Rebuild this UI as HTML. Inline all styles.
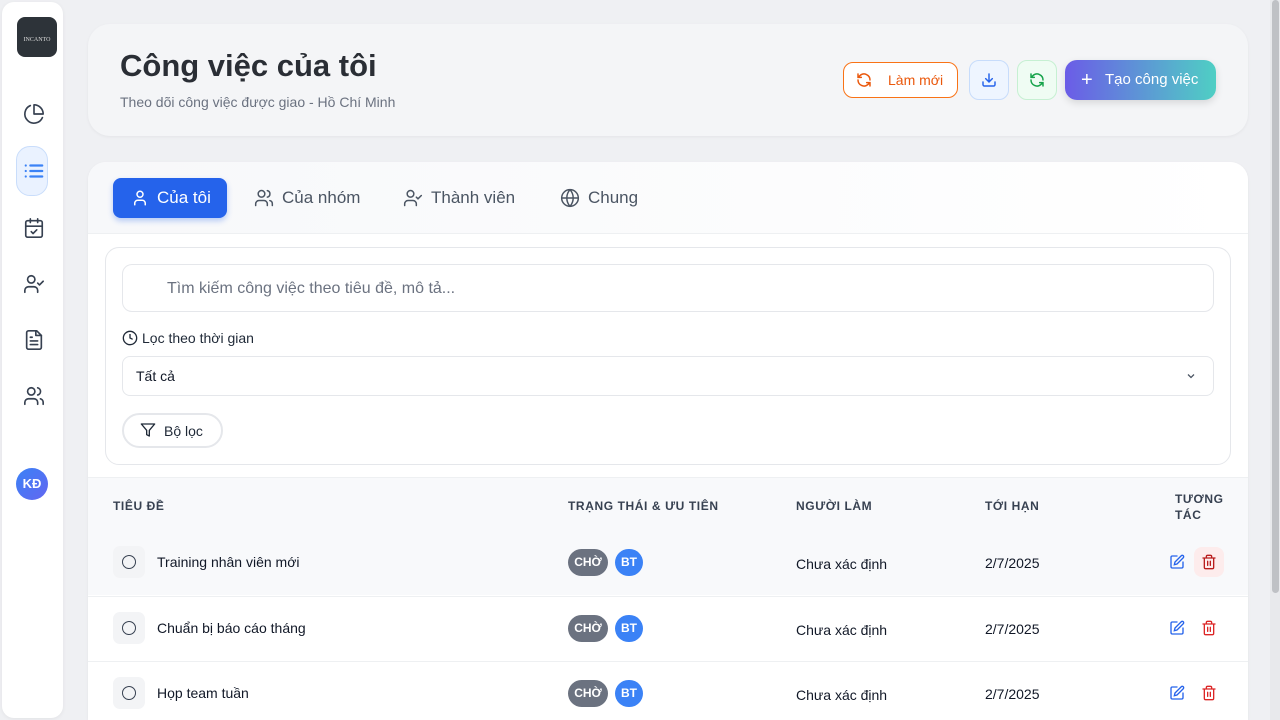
<!DOCTYPE html>
<html style="height:720px;overflow:hidden"><head><meta charset="utf-8"><style>
*{box-sizing:border-box;margin:0;padding:0}
body{width:1280px;height:720px;overflow:hidden;background:#eff0f3;font-family:"Liberation Sans","Noto Sans CJK SC",sans-serif;color:#1f2937;position:relative}
.abs{position:absolute}
svg{display:block}
.side{left:2px;top:2px;width:61px;height:716px;background:#fff;border-radius:12px;box-shadow:0 1px 4px rgba(0,0,0,.06)}
.si{position:absolute;left:21px;width:22px;height:22px}
.hdr{left:88px;top:24px;width:1160px;height:112px;background:#f4f5f7;border-radius:22px;box-shadow:0 1px 3px rgba(0,0,0,.05)}
.main{left:88px;top:162px;width:1160px;height:558px;background:#fff;border-radius:18px 18px 0 0;box-shadow:0 1px 3px rgba(0,0,0,.05);overflow:hidden}
.tab{position:absolute;top:16px;height:40px;display:flex;align-items:center;gap:8px;font-size:17px;color:#4b5563}
.th{position:absolute;font-size:12px;font-weight:bold;letter-spacing:.6px;color:#374151}
.row{position:absolute;left:0;width:1160px;height:65px;border-top:1px solid #eef0f2}
.chk{position:absolute;left:25px;top:16px;width:32px;height:32px;background:#f3f4f6;border-radius:7px}
.chk div{position:absolute;left:9px;top:9px;width:14px;height:14px;border:1.6px solid #374151;border-radius:50%}
.tt{position:absolute;left:69px;top:24px;font-size:14px;color:#111827}
.b1{position:absolute;left:480px;top:19px;width:40px;height:27px;border-radius:14px;background:#6b7280;color:#fff;font-size:12px;font-weight:bold;text-align:center;line-height:27px}
.b2{position:absolute;left:527px;top:19px;width:28px;height:27px;border-radius:14px;background:#3b82f6;color:#fff;font-size:12px;font-weight:bold;text-align:center;line-height:27px}
.p{position:absolute;left:708px;top:26px;font-size:14px;color:#111827}
.d{position:absolute;left:897px;top:25px;font-size:14px;color:#111827}
.ed{position:absolute;left:1081px;top:24px}
.dl{position:absolute;left:1106px;top:17px;width:30px;height:30px;border-radius:8px}
</style></head><body>
<div class="abs side">
 <div class="abs" style="left:15px;top:15px;width:40px;height:40px;background:#2d3339;border-radius:8px;color:#ddd;font-family:'Liberation Serif',serif;font-size:6px;text-align:center;padding-top:20px">INCANTO</div>
 <svg class="si" style="top:101px" viewBox="0 0 24 24" fill="none" stroke="#374151" stroke-width="1.8" stroke-linecap="round" stroke-linejoin="round"><path d="M21.2 15.9A10 10 0 1 1 8 2.8"/><path d="M22 12A10 10 0 0 0 12 2v10z"/></svg>
 <div class="abs" style="left:14px;top:144px;width:32px;height:50px;background:#eaf2ff;border:1.5px solid #c9ddfb;border-radius:14px"></div>
 <svg class="si" style="top:158px" viewBox="0 0 24 24" fill="none" stroke="#3b82f6" stroke-width="2.4" stroke-linecap="round"><path d="M8 6h13M8 12h13M8 18h13M3 6h.01M3 12h.01M3 18h.01"/></svg>
 <svg class="si" style="top:215px" viewBox="0 0 24 24" fill="none" stroke="#374151" stroke-width="1.8" stroke-linecap="round" stroke-linejoin="round"><rect x="3" y="4" width="18" height="18" rx="2"/><path d="M16 2v4M8 2v4M3 10h18M9 16l2 2 4-4"/></svg>
 <svg class="si" style="top:271px" viewBox="0 0 24 24" fill="none" stroke="#374151" stroke-width="1.8" stroke-linecap="round" stroke-linejoin="round"><path d="M16 21v-2a4 4 0 0 0-4-4H6a4 4 0 0 0-4 4v2"/><circle cx="9" cy="7" r="4"/><path d="M16 11l2 2 4-4"/></svg>
 <svg class="si" style="top:327px" viewBox="0 0 24 24" fill="none" stroke="#374151" stroke-width="1.8" stroke-linecap="round" stroke-linejoin="round"><path d="M15 2H6a2 2 0 0 0-2 2v16a2 2 0 0 0 2 2h12a2 2 0 0 0 2-2V7z"/><path d="M14 2v5h6M16 13H8M16 17H8M10 9H8"/></svg>
 <svg class="si" style="top:383px" viewBox="0 0 24 24" fill="none" stroke="#374151" stroke-width="1.8" stroke-linecap="round" stroke-linejoin="round"><path d="M16 21v-2a4 4 0 0 0-4-4H6a4 4 0 0 0-4 4v2"/><circle cx="9" cy="7" r="4"/><path d="M22 21v-2a4 4 0 0 0-3-3.9M16 3.1a4 4 0 0 1 0 7.8"/></svg>
 <div class="abs" style="left:14px;top:466px;width:32px;height:32px;border-radius:50%;background:linear-gradient(135deg,#3b82f6,#6366f1);color:#fff;font-size:13px;font-weight:bold;text-align:center;line-height:32px">KĐ</div>
</div>

<div class="abs hdr">
 <div class="abs" style="left:32px;top:24px;font-size:31px;font-weight:bold;color:#2a2e35">Công việc của tôi</div>
 <div class="abs" style="left:32px;top:70px;font-size:14px;color:#6b7280">Theo dõi công việc được giao - Hồ Chí Minh</div>
 <div class="abs" style="left:755px;top:38px;width:115px;height:36px;border:1.3px solid #f97316;border-radius:10px;background:#fff;color:#ea580c;font-size:14px;line-height:34px">
  <svg class="abs" style="left:12px;top:9px" width="16" height="16" viewBox="0 0 24 24" fill="none" stroke="#ea580c" stroke-width="2.2" stroke-linecap="round"><path d="M21 12a9 9 0 0 0-15-6.7L3 8M3 3v5h5M3 12a9 9 0 0 0 15 6.7L21 16M21 21v-5h-5"/></svg>
  <span class="abs" style="left:44px">Làm mới</span></div>
 <div class="abs" style="left:881px;top:36px;width:40px;height:40px;border:1.3px solid #c7dcfb;border-radius:10px;background:#eef5ff">
  <svg class="abs" style="left:11px;top:11px" width="16" height="16" viewBox="0 0 24 24" fill="none" stroke="#2563eb" stroke-width="2.2" stroke-linecap="round"><path d="M21 15v4a2 2 0 0 1-2 2H5a2 2 0 0 1-2-2v-4M7 10l5 5 5-5M12 15V3"/></svg></div>
 <div class="abs" style="left:929px;top:36px;width:40px;height:40px;border:1.3px solid #c6f0d2;border-radius:10px;background:#effcf3">
  <svg class="abs" style="left:11px;top:11px" width="16" height="16" viewBox="0 0 24 24" fill="none" stroke="#16a34a" stroke-width="2.2" stroke-linecap="round"><path d="M21 12a9 9 0 0 0-15-6.7L3 8M3 3v5h5M3 12a9 9 0 0 0 15 6.7L21 16M21 21v-5h-5"/></svg></div>
 <div class="abs" style="left:977px;top:36px;width:151px;height:40px;border-radius:12px;background:linear-gradient(90deg,#6b5ce7,#4fcfc4);box-shadow:0 3px 8px rgba(0,0,0,.12);color:#fff;font-size:15px;line-height:40px">
  <span class="abs" style="left:16px;font-size:20px">+</span><span class="abs" style="left:40px">Tạo công việc</span></div>
</div>

<div class="abs main">
 <div class="abs" style="left:0;top:0;width:1160px;height:72px;background:linear-gradient(90deg,#f7f8fa,#fff);border-bottom:1px solid #eef0f2"></div>
 <div class="tab" style="left:25px;width:114px;background:#2563eb;border-radius:8px;color:#fff;padding-left:18px;box-shadow:0 3px 6px rgba(37,99,235,.3)">
  <svg width="18" height="18" viewBox="0 0 24 24" fill="none" stroke="#fff" stroke-width="2" stroke-linecap="round"><path d="M19 21v-2a4 4 0 0 0-4-4H9a4 4 0 0 0-4 4v2"/><circle cx="12" cy="7" r="4"/></svg>Của tôi</div>
 <div class="tab" style="left:166px"><svg width="20" height="20" viewBox="0 0 24 24" fill="none" stroke="#4b5563" stroke-width="1.8" stroke-linecap="round"><path d="M16 21v-2a4 4 0 0 0-4-4H6a4 4 0 0 0-4 4v2"/><circle cx="9" cy="7" r="4"/><path d="M22 21v-2a4 4 0 0 0-3-3.9M16 3.1a4 4 0 0 1 0 7.8"/></svg>Của nhóm</div>
 <div class="tab" style="left:315px"><svg width="20" height="20" viewBox="0 0 24 24" fill="none" stroke="#4b5563" stroke-width="1.8" stroke-linecap="round"><path d="M16 21v-2a4 4 0 0 0-4-4H6a4 4 0 0 0-4 4v2"/><circle cx="9" cy="7" r="4"/><path d="M16 11l2 2 4-4"/></svg>Thành viên</div>
 <div class="tab" style="left:472px"><svg width="20" height="20" viewBox="0 0 24 24" fill="none" stroke="#4b5563" stroke-width="1.8"><circle cx="12" cy="12" r="10"/><path d="M2 12h20M12 2a15 15 0 0 1 0 20M12 2a15 15 0 0 0 0 20"/></svg>Chung</div>

 <div class="abs" style="left:17px;top:85px;width:1126px;height:218px;border:1px solid #e5e7eb;border-radius:14px"></div>
 <div class="abs" style="left:34px;top:102px;width:1092px;height:48px;border:1px solid #e5e7eb;border-radius:10px;font-size:16px;color:#6b7280;padding:15px 0 0 44px">Tìm kiếm công việc theo tiêu đề, mô tả...</div>
 <svg class="abs" style="left:34px;top:168px" width="16" height="16" viewBox="0 0 24 24" fill="none" stroke="#1f2937" stroke-width="2"><circle cx="12" cy="12" r="10"/><path d="M12 6v6l4 2"/></svg>
 <div class="abs" style="left:54px;top:168px;font-size:14px;color:#1f2937">Lọc theo thời gian</div>
 <div class="abs" style="left:34px;top:194px;width:1092px;height:40px;border:1px solid #e5e7eb;border-radius:8px;font-size:14px;color:#111827;padding:11px 0 0 13px">Tất cả</div>
 <svg class="abs" style="left:1097px;top:208px" width="12" height="12" viewBox="0 0 24 24" fill="none" stroke="#4b5563" stroke-width="2.5"><path d="M6 9l6 6 6-6"/></svg>
 <div class="abs" style="left:34px;top:251px;width:101px;height:35px;border:2px solid #e5e7eb;border-radius:18px;font-size:14px;color:#1f2937;padding:8px 0 0 40px">Bộ lọc</div>
 <svg class="abs" style="left:52px;top:260px" width="16" height="16" viewBox="0 0 24 24" fill="none" stroke="#1f2937" stroke-width="2" stroke-linejoin="round"><path d="M22 3H2l8 9.5V19l4 2v-8.5z"/></svg>

 <div class="abs" style="left:0;top:315px;width:1160px;height:60px;background:#f8f9fb;border-top:1px solid #eef0f2"></div>
 <div class="th" style="left:25px;top:337px">TIÊU ĐỀ</div>
 <div class="th" style="left:480px;top:337px">TRẠNG THÁI &amp; ƯU TIÊN</div>
 <div class="th" style="left:708px;top:337px">NGƯỜI LÀM</div>
 <div class="th" style="left:897px;top:337px">TỚI HẠN</div>
 <div class="th" style="left:1087px;top:329px;line-height:16px">TƯƠNG<br>TÁC</div>

 <div class="row" style="top:368px;border-top:none;background:#f8f9fb"><div class="chk"><div></div></div><div class="tt">Training nhân viên mới</div><div class="b1">CHỜ</div><div class="b2">BT</div><div class="p">Chưa xác định</div><div class="d">2/7/2025</div>
  <svg class="ed" width="16" height="16" viewBox="0 0 24 24" fill="none" stroke="#2563eb" stroke-width="2" stroke-linecap="round"><path d="M12 3H5a2 2 0 0 0-2 2v14a2 2 0 0 0 2 2h14a2 2 0 0 0 2-2v-7"/><path d="M18.4 2.6a2.1 2.1 0 0 1 3 3L12 15l-4 1 1-4z"/></svg>
  <div class="dl" style="background:#fdecec"><svg class="abs" style="left:7px;top:7px" width="16" height="16" viewBox="0 0 24 24" fill="none" stroke="#b91c1c" stroke-width="2" stroke-linecap="round"><path d="M3 6h18M19 6v14a2 2 0 0 1-2 2H7a2 2 0 0 1-2-2V6M8 6V4a2 2 0 0 1 2-2h4a2 2 0 0 1 2 2v2M10 11v6M14 11v6"/></svg></div></div>
 <div class="row" style="top:434px;background:#fff"><div class="chk" style="top:15px"><div></div></div><div class="tt" style="top:23px">Chuẩn bị báo cáo tháng</div><div class="b1" style="top:18px">CHỜ</div><div class="b2" style="top:18px">BT</div><div class="p" style="top:25px">Chưa xác định</div><div class="d" style="top:24px">2/7/2025</div>
  <svg class="ed" style="top:23px" width="16" height="16" viewBox="0 0 24 24" fill="none" stroke="#2563eb" stroke-width="2" stroke-linecap="round"><path d="M12 3H5a2 2 0 0 0-2 2v14a2 2 0 0 0 2 2h14a2 2 0 0 0 2-2v-7"/><path d="M18.4 2.6a2.1 2.1 0 0 1 3 3L12 15l-4 1 1-4z"/></svg>
  <div class="dl" style="top:16px"><svg class="abs" style="left:7px;top:7px" width="16" height="16" viewBox="0 0 24 24" fill="none" stroke="#dc2626" stroke-width="2" stroke-linecap="round"><path d="M3 6h18M19 6v14a2 2 0 0 1-2 2H7a2 2 0 0 1-2-2V6M8 6V4a2 2 0 0 1 2-2h4a2 2 0 0 1 2 2v2M10 11v6M14 11v6"/></svg></div></div>
 <div class="row" style="top:499px;background:#fff"><div class="chk" style="top:15px"><div></div></div><div class="tt" style="top:23px">Họp team tuần</div><div class="b1" style="top:18px">CHỜ</div><div class="b2" style="top:18px">BT</div><div class="p" style="top:25px">Chưa xác định</div><div class="d" style="top:24px">2/7/2025</div>
  <svg class="ed" style="top:23px" width="16" height="16" viewBox="0 0 24 24" fill="none" stroke="#2563eb" stroke-width="2" stroke-linecap="round"><path d="M12 3H5a2 2 0 0 0-2 2v14a2 2 0 0 0 2 2h14a2 2 0 0 0 2-2v-7"/><path d="M18.4 2.6a2.1 2.1 0 0 1 3 3L12 15l-4 1 1-4z"/></svg>
  <div class="dl" style="top:16px"><svg class="abs" style="left:7px;top:7px" width="16" height="16" viewBox="0 0 24 24" fill="none" stroke="#dc2626" stroke-width="2" stroke-linecap="round"><path d="M3 6h18M19 6v14a2 2 0 0 1-2 2H7a2 2 0 0 1-2-2V6M8 6V4a2 2 0 0 1 2-2h4a2 2 0 0 1 2 2v2M10 11v6M14 11v6"/></svg></div></div>
</div>

<div class="abs" style="left:1270px;top:0;width:10px;height:720px;background:#e8e9ec"></div>
<div class="abs" style="left:1272px;top:0;width:7px;height:593px;background:#bfc1c5;border-radius:4px"></div>
</body></html>
